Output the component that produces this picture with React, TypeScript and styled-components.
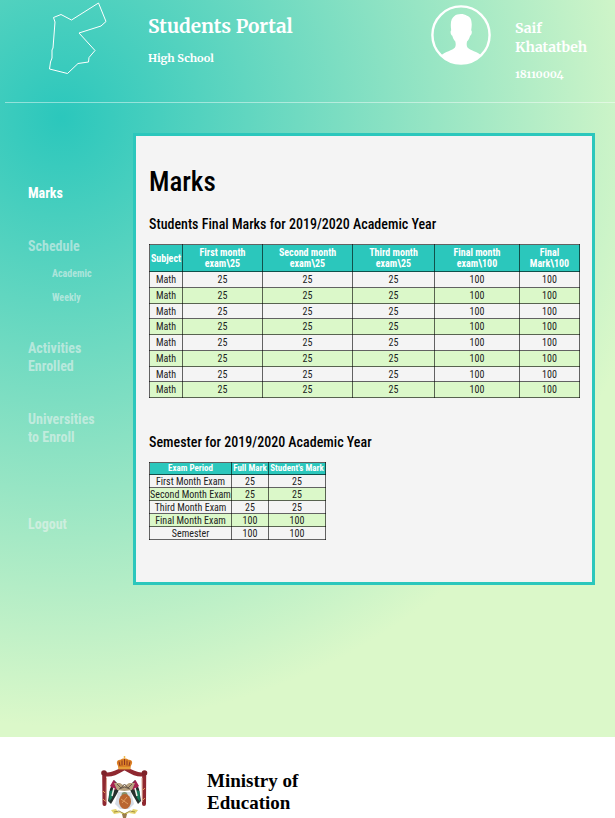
import React from "react";
import styled, { createGlobalStyle } from "styled-components";

const sans = `"Roboto Condensed", "Liberation Sans Narrow", Roboto, sans-serif`;
const serif = `Merriweather, "DejaVu Serif Condensed", "DejaVu Serif", serif`;
const teal = "#2bc7bc";
const mint = "#dbf8c9";
const paper = "#f4f4f4";

const GlobalStyle = createGlobalStyle`
  * { box-sizing: border-box; }
  body { margin: 0; background: #fff; }
  h1, h2, h3, p, ul { margin: 0; padding: 0; }
  ul { list-style: none; }
`;

const Portal = styled.div`
  padding-bottom: 152px;
  background: radial-gradient(circle at 10% 16%, ${teal} 0, ${mint} 608px);
`;

const Header = styled.header`
  display: flex;
  align-items: flex-start;
  height: 103px;
  margin-left: 5px;
  border-bottom: 1px solid rgba(255, 255, 255, 0.45);
  color: #fff;
  font-family: ${serif};
  font-weight: 700;
  font-variant-numeric: oldstyle-nums;
`;

const MapSlot = styled.div`
  flex: 0 0 143px;
  padding: 1px 0 0 43px;
`;

const Titles = styled.div`
  flex: 1;
  padding-top: 13px;
`;

const PortalName = styled.h1`
  font-size: 19px;
  line-height: 26px;
`;

const Level = styled.p`
  margin-top: 11px;
  font-size: 11px;
  line-height: 16px;
`;

const Profile = styled.div`
  display: flex;
  flex: 0 0 184px;
  gap: 24px;
  padding-top: 5px;
`;

const Person = styled.div`
  padding-top: 14px;
`;

const PersonName = styled.p`
  width: 80px;
  font-size: 14px;
  line-height: 19px;
`;

const PersonId = styled.p`
  margin-top: 9px;
  font-size: 11px;
  line-height: 16px;
`;

const Body = styled.div`
  display: flex;
  align-items: flex-start;
  padding: 30px 20px 0 0;
`;

const Sidebar = styled.nav`
  flex: 0 0 133px;
  padding: 51px 32px 0 28px;
  font-family: ${sans};
  font-weight: 700;
`;

const MenuItem = styled.li<{ $gap?: number }>`
  margin-top: ${(p) => p.$gap ?? 0}px;
`;

const MenuLink = styled.a<{ $active?: boolean }>`
  display: block;
  color: ${(p) => (p.$active ? "#fff" : "rgba(245, 245, 245, 0.55)")};
  font-size: 14px;
  line-height: 18px;
  text-decoration: none;
`;

const SubLink = styled(MenuLink)`
  margin: 13px 0 0 24px;
  font-size: 10px;
  line-height: 11px;
`;

const Panel = styled.main`
  flex: 1;
  min-width: 0;
  padding: 28px 14px 42px 13px;
  border: 3px solid ${teal};
  background: ${paper};
  color: #000;
  font-family: ${sans};
`;

const PanelTitle = styled.h2`
  font-size: 27px;
  line-height: 36px;
  font-weight: 500;
`;

const SectionTitle = styled.h3<{ $gap: number }>`
  margin: ${(p) => p.$gap}px 0 10px;
  font-size: 14px;
  line-height: 20px;
  font-weight: 500;
`;

const Table = styled.table<{ $wide?: boolean }>`
  width: ${(p) => (p.$wide ? "100%" : "176px")};
  border-collapse: collapse;
  table-layout: fixed;
  font-size: 10px;
  text-align: center;

  th,
  td {
    height: ${(p) => (p.$wide ? 16 : 13)}px;
    padding: 0;
    border: 1px solid rgba(0, 0, 0, 0.6);
    line-height: 11px;
    font-weight: 400;
    color: #222;
    white-space: nowrap;
  }
  thead th {
    height: ${(p) => (p.$wide ? 27 : 12)}px;
    background: ${teal};
    color: #fff;
    font-size: ${(p) => (p.$wide ? 10 : 9)}px;
    font-weight: 700;
  }
  tbody tr:nth-child(even) {
    background: ${mint};
  }
  tbody tr:nth-child(4n + 3) > * {
    height: ${(p) => (p.$wide ? 15 : 13)}px;
  }
`;

const Footer = styled.footer`
  display: flex;
  gap: 58px;
  min-height: 80px;
  padding: 19px 0 0 100px;
  background: #fff;
  color: #000;
`;

const Ministry = styled.p`
  width: 120px;
  padding-top: 14px;
  font-family: "Liberation Serif", serif;
  font-size: 19px;
  line-height: 22px;
  font-weight: 700;
`;

const JordanMap = () => (
  <svg width="60" height="75" viewBox="48 1 60 75" fill="none" stroke="#fff" strokeWidth="1" strokeLinejoin="round" display="block" role="img" aria-label="Jordan">
    <path d="M53.5 17.5 61 14.5 71.5 20 98.5 3 106 21.5 101 26 79 33 95 50.5 89 57.5 88.5 62 78 63.5 67.5 73.5 49.5 69 50.5 62 52 58 52 50 53 48 55 22Z" />
  </svg>
);

const Avatar = () => (
  <svg width="60" height="60" viewBox="0 0 60 60" display="block" role="img" aria-label="Profile">
    <circle cx="30" cy="30" r="28.6" fill="none" stroke="#fff" strokeWidth="2.4" />
    <path
      fill="#fff"
      d="M10 50.5C14 46.5 21.5 45.5 24 42.5 25 41 24.8 38.5 24.3 36.5 22.5 34.5 21.7 32.6 21.3 30.8 19.6 30.2 19 26 20.2 25.2 19 17 20.5 13 23.5 11 26 8.7 32.5 8.3 36 10.7 41 12 41.3 18.5 40.2 25.2 41.4 26 40.8 30.2 39.1 30.8 38.6 33 37.8 34.8 36 36.5 35.6 38.5 35.4 41 36.5 42.5 39 45.5 46.5 46.5 50.5 50.5 39 61.5 21 61.5 10 50.5Z"
    />
  </svg>
);

const CoatOfArms = () => (
  <svg width="49" height="62" viewBox="0 0 49 62" display="block" role="img" aria-label="Coat of arms">
    <g fill="none" stroke="#8f2830" strokeLinecap="round" strokeLinejoin="round">
      <path d="M4.5 18C11 20 18 16 24.5 12 31 16 38 20 44.5 18" strokeWidth="4" />
      <path d="M4.2 20 4.5 48M44.2 20 44 48" strokeWidth="4" />
    </g>
    <path d="M6.5 22 6 46M42 22 42.3 46" stroke="#d9a08e" strokeWidth="1" />
    <path d="M3 35 5 37M45 32 43 34M3 43 5 45M45 42 43 44" stroke="#df9852" strokeWidth="1" />
    <circle cx="4" cy="17" r="2.8" fill="#7d2229" />
    <circle cx="44.5" cy="17" r="2.8" fill="#7d2229" />
    <path d="M18 10C15.5 6 17.5 3.5 20.5 3.8 22 2 27 2 28.5 3.8 31.8 3.5 33.5 6 30.8 10L30.3 13.5H18.5Z" fill="#dc8126" />
    <path d="M20 10 19 5.5M24.5 9V3M29 10 30 5.5M22 9.5 22 4.5M27 9.5 27 4.5" stroke="#8d3520" strokeWidth="1" />
    <path d="M18.5 12H30.5M24.5 0V3M23.5 1H25.5" stroke="#efba4d" strokeWidth="1" />
    <path d="M14 24 20 30 18 36 11 48 8 45 10 33Z" fill="#252f2c" />
    <path d="M35 24 29 30 31 36 38 48 41 45 39 33Z" fill="#252f2c" />
    <path d="M13.5 24 20 31 15 34 10 30ZM35.5 24 29 31 34 34 39 30Z" fill="#a32350" />
    <path d="M9.5 35 13.5 34 12 42 9 46ZM39.5 35 35.5 34 37 42 40 46Z" fill="#14785a" />
    <path d="M14 32 12 40M35 32 37 40" stroke="#eef0e9" strokeWidth="1.5" />
    <path d="M14 27 20 27 24.5 30 29 27 35 27 32 34 24.5 35 17 34Z" fill="#b7a17f" />
    <path d="M17 28 21 32 24.5 28 28 32 32 28M19 33 24.5 31 30 33" fill="none" stroke="#66574a" strokeWidth="1" />
    <path d="M18 36 31 36 34 48 29 53 20 53 15 48Z" fill="#d5dce5" />
    <circle cx="24.5" cy="39" r="3" fill="#87936d" />
    <ellipse cx="25" cy="45.5" rx="6" ry="7.5" fill="#b96530" />
    <path d="M21 43 28 48M22 47 27 41" stroke="#e09c60" strokeWidth="1" />
    <path d="M11 54 16 53 18 56 24.5 57 31 56 33 53 38 54 35 58 29 57 24.5 59 20 57 14 58Z" fill="#e6d56c" />
    <path d="M14 56 19 55 24.5 58 30 55 35 56" fill="none" stroke="#a29045" strokeWidth="1" />
    <path d="M22 58 27 58 26 62 23 62Z" fill="#9a7b4c" />
  </svg>
);

interface ColumnInfo {
  title: string[];
  width: number;
}

const finalColumns: ColumnInfo[] = [
  { title: ["Subject"], width: 33 },
  { title: ["First month", "exam\\25"], width: 80 },
  { title: ["Second month", "exam\\25"], width: 90 },
  { title: ["Third month", "exam\\25"], width: 82 },
  { title: ["Final month", "exam\\100"], width: 85 },
  { title: ["Final", "Mark\\100"], width: 60 },
];
const finalRows = Array.from({ length: 8 }, () => ["Math", "25", "25", "25", "100", "100"]);

const semesterColumns: ColumnInfo[] = [
  { title: ["Exam Period"], width: 82 },
  { title: ["Full Mark"], width: 37 },
  { title: ["Student's Mark"], width: 57 },
];
const semesterRows = [
  ["First Month Exam", "25", "25"],
  ["Second Month Exam", "25", "25"],
  ["Third Month Exam", "25", "25"],
  ["Final Month Exam", "100", "100"],
  ["Semester", "100", "100"],
];

const Column = styled.col<{ $width: number }>`
  width: ${(p) => p.$width}px;
`;

interface MarksTableProps {
  columns: ColumnInfo[];
  rows: string[][];
  wide?: boolean;
  labelledBy: string;
}

const MarksTable = ({ columns, rows, wide, labelledBy }: MarksTableProps) => (
  <Table $wide={wide} aria-labelledby={labelledBy}>
    <colgroup>
      {columns.map((c, i) => (
        <Column key={i} $width={c.width} />
      ))}
    </colgroup>
    <thead>
      <tr>
        {columns.map((c, i) => (
          <th key={i} scope="col">
            {c.title[0]}
            {c.title[1] && <br />}
            {c.title[1]}
          </th>
        ))}
      </tr>
    </thead>
    <tbody>
      {rows.map(([label, ...marks], i) => (
        <tr key={i}>
          <th scope="row">{label}</th>
          {marks.map((mark, j) => (
            <td key={j}>{mark}</td>
          ))}
        </tr>
      ))}
    </tbody>
  </Table>
);

export default function App() {
  return (
    <>
      <GlobalStyle />
      <Portal>
        <Header>
          <MapSlot>
            <JordanMap />
          </MapSlot>
          <Titles>
            <PortalName>Students Portal</PortalName>
            <Level>High School</Level>
          </Titles>
          <Profile>
            <Avatar />
            <Person>
              <PersonName>Saif Khatatbeh</PersonName>
              <PersonId>18110004</PersonId>
            </Person>
          </Profile>
        </Header>
        <Body>
          <Sidebar>
            <ul>
              <MenuItem>
                <MenuLink href="#marks" $active>Marks</MenuLink>
              </MenuItem>
              <MenuItem $gap={35}>
                <MenuLink href="#schedule">Schedule</MenuLink>
                <SubLink href="#academic">Academic</SubLink>
                <SubLink href="#weekly">Weekly</SubLink>
              </MenuItem>
              <MenuItem $gap={36}>
                <MenuLink href="#activities">Activities Enrolled</MenuLink>
              </MenuItem>
              <MenuItem $gap={35}>
                <MenuLink href="#universities">Universities to Enroll</MenuLink>
              </MenuItem>
              <MenuItem $gap={69}>
                <MenuLink href="#logout">Logout</MenuLink>
              </MenuItem>
            </ul>
          </Sidebar>
          <Panel>
            <PanelTitle>Marks</PanelTitle>
            <SectionTitle id="final" $gap={14}>Students Final Marks for 2019/2020 Academic Year</SectionTitle>
            <MarksTable wide columns={finalColumns} rows={finalRows} labelledBy="final" />
            <SectionTitle id="semester" $gap={34}>Semester for 2019/2020 Academic Year</SectionTitle>
            <MarksTable columns={semesterColumns} rows={semesterRows} labelledBy="semester" />
          </Panel>
        </Body>
      </Portal>
      <Footer>
        <CoatOfArms />
        <Ministry>Ministry of Education</Ministry>
      </Footer>
    </>
  );
}
